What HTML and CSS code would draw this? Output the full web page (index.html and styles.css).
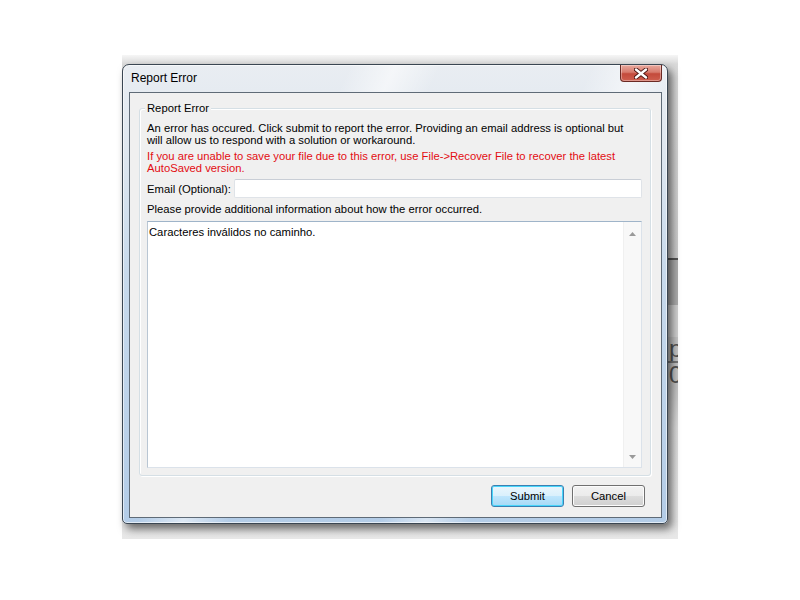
FILE: index.html
```html
<!DOCTYPE html>
<html lang="en">
<head>
    <meta charset="UTF-8">
    <title>Report Error</title>
    <link rel="stylesheet" href="styles.css">
</head>
<body>
    <div class="screen">
        <!-- application window behind the dialog -->
        <div class="backdrop">
            <div class="band band-top"></div>
            <div class="band band-line"></div>
            <div class="band band-mid"></div>
            <div class="band band-light"></div>
            <div class="band band-glyph">p</div>
            <div class="band band-rule"></div>
            <div class="band band-glyph">0</div>
            <div class="band band-bottom"></div>
        </div>

        <div class="window">
            <div class="titlebar">
                <span class="title">Report Error</span>
                <div class="close">
                    <svg width="14" height="11" viewBox="0 0 14 11">
                        <path d="M2 1.5 L12 9.5 M12 1.5 L2 9.5" stroke="#4a1410" stroke-width="4.2" stroke-linecap="round"/>
                        <path d="M2 1.5 L12 9.5 M12 1.5 L2 9.5" stroke="#ffffff" stroke-width="2.4" stroke-linecap="round"/>
                    </svg>
                </div>
            </div>

            <div class="client">
                <div class="group">
                    <span class="group-title">Report Error</span>
                    <p class="info">An error has occured. Click submit to report the error. Providing an email address is optional but<br>will allow us to respond with a solution or workaround.</p>
                    <p class="warn">If you are unable to save your file due to this error, use File-&gt;Recover File to recover the latest<br>AutoSaved version.</p>
                    <div class="email-row">
                        <label class="email-label">Email (Optional):</label>
                        <div class="field"></div>
                    </div>
                    <p class="prompt">Please provide additional information about how the error occurred.</p>
                    <div class="memo">
                        <div class="memo-text">Caracteres inválidos no caminho.</div>
                        <div class="scrollbar">
                            <svg width="7" height="4" viewBox="0 0 7 4"><path d="M0 4 L3.5 0 L7 4 Z" fill="#9a9a9a"/></svg>
                            <svg width="7" height="4" viewBox="0 0 7 4"><path d="M0 0 L3.5 4 L7 0 Z" fill="#9a9a9a"/></svg>
                        </div>
                    </div>
                </div>

                <div class="actions">
                    <button class="btn btn-default">Submit</button>
                    <button class="btn">Cancel</button>
                </div>
            </div>
        </div>
    </div>
</body>
</html>
```

FILE: styles.css
```css
html, body {
    margin: 0;
    background-color: #ffffff;
    font-family: "Liberation Sans", Arial, sans-serif;
}

.screen {
    position: relative;
    width: 800px;
    height: 600px;
    overflow: hidden;
}

/* ---- app behind the dialog ---- */

.backdrop {
    position: absolute;
    left: 122px;
    top: 55px;
    width: 556px;
    height: 484px;
    display: flex;
    flex-direction: column;
}

.band {
    padding-left: 547px;
    font-size: 24px;
    line-height: 1;
    color: #555555;
}

.band-top {
    height: 203px;
    background: linear-gradient(to bottom, #f6f6f6, #dadada 9px, #cdcdcd);
}

.band-line {
    height: 2px;
    background-color: #555555;
}

.band-mid {
    height: 45px;
    background-color: #adadad;
}

.band-light {
    height: 32px;
    background-color: #d2d2d2;
}

.band-glyph {
    height: 24px;
    background-color: #c6c6c6;
    overflow: hidden;
}

.band-rule {
    height: 2px;
    background-color: #777777;
}

.band-bottom {
    flex: 1;
    background: linear-gradient(to bottom, #c6c6c6, #dedede 40px, #e8e8e8);
}

/* ---- dialog window ---- */

.window {
    position: absolute;
    left: 122px;
    top: 64px;
    width: 546px;
    height: 460px;
    box-sizing: border-box;
    padding: 0 5px 5px 6px;
    border: 1px solid #3a4652;
    border-radius: 7px 7px 5px 5px;
    display: flex;
    flex-direction: column;
    background:
        linear-gradient(115deg, rgba(255,255,255,0) 30%, rgba(255,255,255,0.55) 36%, rgba(255,255,255,0) 42%, rgba(255,255,255,0) 62%, rgba(255,255,255,0.5) 68%, rgba(255,255,255,0) 74%),
        linear-gradient(to bottom, #e9edf2 0%, #dfe7ef 18%, #c8daec 45%, #b3cce7 100%);
    box-shadow: inset 0 0 0 1px rgba(255,255,255,0.6), 4px 5px 9px rgba(0,0,0,0.55);
}

.titlebar {
    height: 27px;
    display: flex;
    justify-content: space-between;
    align-items: flex-start;
}

.title {
    padding-left: 2px;
    line-height: 27px;
    font-size: 12px;
    color: #000000;
}

.close {
    width: 42px;
    height: 17px;
    box-sizing: border-box;
    border: 1px solid #6b2a24;
    border-top: none;
    border-radius: 0 0 4px 4px;
    background: linear-gradient(to bottom, #e9a99e 0%, #d77b6d 45%, #c34a3b 55%, #cf5f4f 100%);
    box-shadow: inset 0 0 0 1px rgba(255,255,255,0.35);
    display: flex;
    align-items: center;
    justify-content: center;
}

.client {
    flex: 1;
    border: 1px solid #5f6b77;
    background-color: #f0f0f0;
    display: flex;
    flex-direction: column;
}

/* ---- group box ---- */

.group {
    position: relative;
    margin: 15px 10px 0 9px;
    padding: 13px 8px 7px 7px;
    border: 1px solid #d5dfe5;
    border-radius: 3px;
    box-shadow: inset 1px 1px 0 #ffffff, 1px 1px 0 #ffffff;
    font-size: 11.25px;
    color: #000000;
}

.group-title {
    position: absolute;
    top: -7px;
    left: 5px;
    padding: 0 2px;
    line-height: 13px;
    background-color: #f0f0f0;
    font-size: 11.25px;
}

.group p {
    margin: 0;
    line-height: 12px;
}

.warn {
    margin-top: 4px !important;
    color: #e30d12;
}

.email-row {
    margin-top: 5px;
    display: flex;
    align-items: center;
}

.email-label {
    width: 87px;
}

.field {
    flex: 1;
    height: 19px;
    box-sizing: border-box;
    background-color: #ffffff;
    border: 1px solid #dfe3e8;
    border-top-color: #c9ced6;
    border-radius: 2px;
}

.prompt {
    margin-top: 5px !important;
}

.memo {
    margin-top: 6px;
    height: 247px;
    box-sizing: border-box;
    display: flex;
    background-color: #ffffff;
    border: 1px solid #dbe2ea;
    border-top-color: #9fb4c9;
    border-left-color: #b9c6d3;
}

.memo-text {
    flex: 1;
    padding: 4px 1px;
    line-height: 12px;
}

.scrollbar {
    width: 17px;
    background-color: #f8f8f8;
    border-left: 1px solid #f0f0f0;
    display: flex;
    flex-direction: column;
    justify-content: space-between;
    align-items: center;
    padding: 10px 0 8px;
}

/* ---- buttons ---- */

.actions {
    margin-top: 9px;
    padding-right: 16px;
    display: flex;
    justify-content: flex-end;
    gap: 8px;
}

.btn {
    width: 73px;
    height: 22px;
    padding: 0;
    font-family: "Liberation Sans", Arial, sans-serif;
    font-size: 11.25px;
    color: #000000;
    border: 1px solid #707070;
    border-radius: 3px;
    background: linear-gradient(to bottom, #f2f2f2 0%, #ebebeb 50%, #dddddd 51%, #cfcfcf 100%);
    box-shadow: inset 0 0 0 1px #fcfcfc;
}

.btn-default {
    border-color: #3c7fb1;
    background: linear-gradient(to bottom, #eaf6fd 0%, #d9f0fc 50%, #bee6fd 51%, #a7d9f5 100%);
    box-shadow: inset 0 0 0 1px #48d6fb;
}
```
